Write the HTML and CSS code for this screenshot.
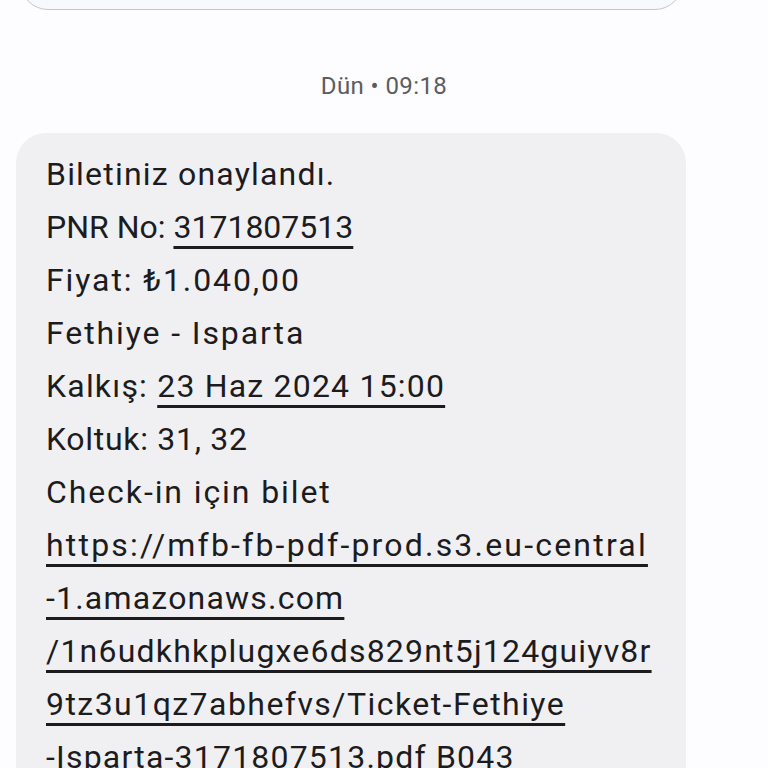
FILE: index.html
```html
<!DOCTYPE html>
<html lang="tr">
<head>
<meta charset="utf-8">
<link rel="stylesheet" href="styles.css">
</head>
<body>
<div class="thread">
  <div class="prev-bubble"></div>
  <div class="stamp">Dün • 09:18</div>
  <div class="bubble">
    <div class="line">Biletiniz onaylandı.</div>
    <div class="line tight">PNR No: <span class="link">3171807513</span></div>
    <div class="line wide">Fiyat: ₺1.040,00</div>
    <div class="line wide">Fethiye - Isparta</div>
    <div class="line">Kalkış: <span class="link">23 Haz 2024 15:00</span></div>
    <div class="line narrow">Koltuk: 31, 32</div>
    <div class="line wide">Check-in için bilet</div>
    <div class="line wider"><span class="link">https://mfb-fb-pdf-prod.s3.eu-central</span></div>
    <div class="line"><span class="link">-1.amazonaws.com</span></div>
    <div class="line"><span class="link">/1n6udkhkplugxe6ds829nt5j124guiyv8r</span></div>
    <div class="line mid"><span class="link">9tz3u1qz7abhefvs/Ticket-Fethiye</span></div>
    <div class="line"><span class="link">-Isparta-3171807513.pdf</span> B043</div>
  </div>
</div>
</body>
</html>
```
FILE: styles.css
```css
html, body {
  margin: 0;
  padding: 0;
  background: #fdfdff;
  overflow: hidden;
}
.thread {
  display: flex;
  flex-direction: column;
  font-family: Roboto, "Noto Sans", sans-serif;
}
.prev-bubble {
  margin: -60px 0 0 20px;
  width: 663px;
  height: 70px;
  box-sizing: border-box;
  border: 1.5px solid #c6c6ca;
  border-radius: 28px;
  background: #f8f9fc;
}
.stamp {
  margin-top: 60px;
  text-align: center;
  font-size: 24px;
  line-height: 32px;
  letter-spacing: 0.4px;
  color: #5b5c60;
}
.bubble {
  margin: 31px 0 0 16px;
  width: 670px;
  box-sizing: border-box;
  padding: 15px 30px 30px;
  background: #f0f0f3;
  border-radius: 30px;
  color: #1c1c1e;
  font-size: 32px;
  line-height: 53px;
}
.line {
  white-space: nowrap;
  letter-spacing: 1.2px;
}
.line.tight { letter-spacing: 0; }
.line.narrow { letter-spacing: 0.7px; }
.line.mid { letter-spacing: 1.45px; }
.line.wide { letter-spacing: 1.9px; }
.line.wider { letter-spacing: 2.2px; }
.link {
  text-decoration: underline;
  text-decoration-thickness: 3px;
  text-underline-offset: 8px;
}
```
